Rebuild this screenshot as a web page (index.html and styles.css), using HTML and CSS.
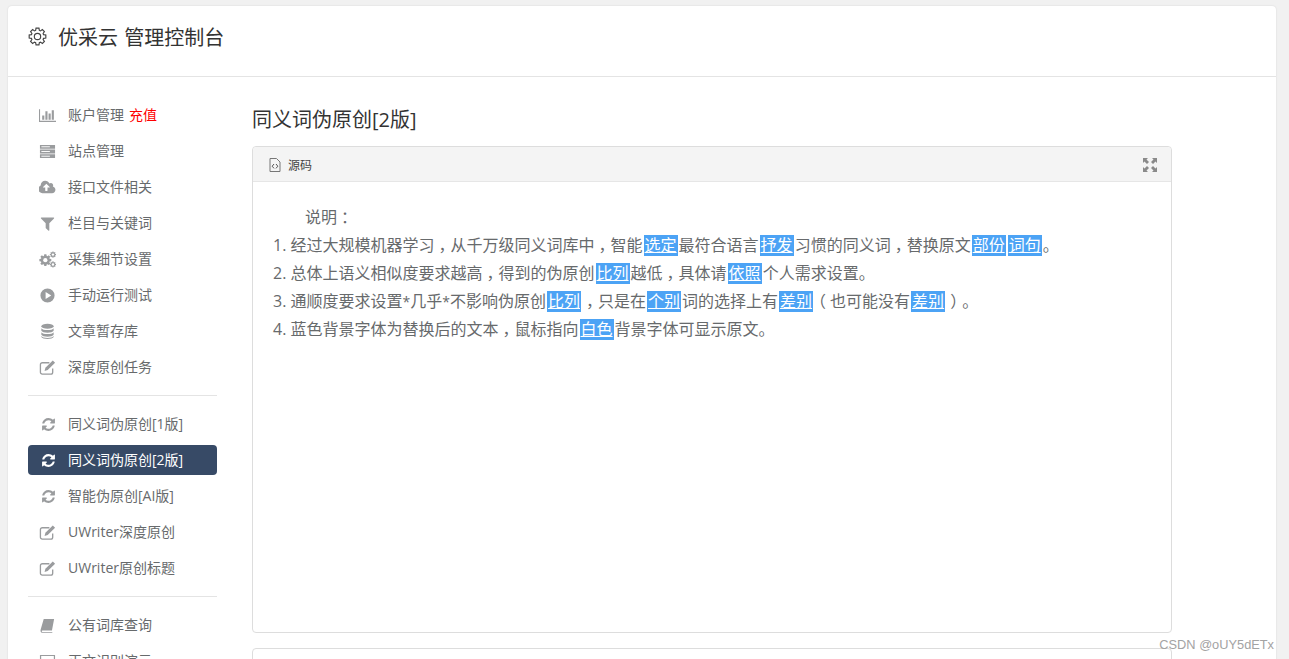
FILE: index.html
```html
<!DOCTYPE html>
<html lang="zh-CN">
<head>
    <meta charset="UTF-8">
    <title>优采云 管理控制台</title>
    <link rel="stylesheet" href="styles.css">
</head>
<body>
    <svg class="defs" width="0" height="0">
        <defs>
            <polygon id="gear" points="7.61,1.12 10.39,1.12 10.75,3.26 11.82,3.7 13.59,2.45 15.55,4.41 14.3,6.18 14.74,7.25 16.88,7.61 16.88,10.39 14.74,10.75 14.3,11.82 15.55,13.59 13.59,15.55 11.82,14.3 10.75,14.74 10.39,16.88 7.61,16.88 7.25,14.74 6.18,14.3 4.41,15.55 2.45,13.59 3.7,11.82 3.26,10.75 1.12,10.39 1.12,7.61 3.26,7.25 3.7,6.18 2.45,4.41 4.41,2.45 6.18,3.7 7.25,3.26"/>
            <symbol id="i-refresh" viewBox="0 0 1792 1792"><path d="M1639 1056q0 5-1 7-64 268-268 434.5t-478 166.5q-146 0-282.5-55t-243.5-157l-129 129q-19 19-45 19t-45-19-19-45v-448q0-26 19-45t45-19h448q26 0 45 19t19 45-19 45l-137 137q71 66 161 102t187 36q134 0 250-65t186-179q11-17 53-117 8-23 30-23h192q13 0 22.5 9.5t9.5 22.5zm25-800v448q0 26-19 45t-45 19h-448q-26 0-45-19t-19-45 19-45l138-138q-148-137-349-137-134 0-250 65t-186 179q-11 17-53 117-8 23-30 23h-199q-13 0-22.5-9.5t-9.5-22.5v-7q65-268 270-434.5t480-166.5q146 0 284 55.5t245 156.5l130-129q19-19 45-19t45 19 19 45z"/></symbol>
            <symbol id="i-edit" viewBox="0 0 18 18"><path d="M14.500 10v4a2 2 0 0 1-2 2H3.500a2 2 0 0 1-2-2V6a2 2 0 0 1 2-2h7.500" fill="none" stroke="currentColor" stroke-width="1.400"/><path d="M14.600 1.500l2.400 2.400-7.800 7.800-3.300.9.900-3.300z"/></symbol>
        </defs>
    </svg>
    <div class="card">
        <header class="card-head">
            <svg class="head-icon" viewBox="0 0 18 18"><use href="#gear"/><circle cx="9" cy="9" r="3"/></svg>
            <h1>优采云 管理控制台</h1>
        </header>
        <div class="main">
            <nav class="sidebar">
                <ul class="menu">
                    <li>
                        <svg class="icon" viewBox="0 0 2048 1792"><path d="M640 896v512h-256v-512h256zm384-512v1024h-256v-1024h256zm1024 1152v128h-2048v-1536h128v1408h1920zm-640-896v768h-256v-768h256zm384-384v1152h-256v-1152h256z"/></svg>
                        <span>账户管理</span><span class="recharge">充值</span>
                    </li>
                    <li>
                        <svg class="icon" viewBox="0 0 18 18"><path d="M1 2h16v4H1zM1 7h16v4H1zM1 12h16v4H1z"/><path class="cut" d="M2.500 4h9M2.500 9h9M2.500 14h9"/></svg>
                        <span>站点管理</span>
                    </li>
                    <li>
                        <svg class="icon" viewBox="0 0 1920 1792"><path d="M1216 864q0-14-9-23l-352-352q-9-9-23-9t-23 9l-351 351q-10 12-10 24 0 14 9 23t23 9h224v352q0 13 9.500 22.500t22.500 9.500h192q13 0 22.500-9.500t9.500-22.500v-352h224q13 0 22.500-9.500t9.500-22.500zm640 288q0 159-112.500 271.500t-271.500 112.500h-1088q-185 0-316.500-131.500t-131.500-316.500q0-130 70-240t188-165q-2-30-2-43 0-212 150-362t362-150q156 0 285.500 87t188.500 231q71-62 166-62 106 0 181 75t75 181q0 76-41 138 130 31 213.500 135.500t83.500 238.500z"/></svg>
                        <span>接口文件相关</span>
                    </li>
                    <li>
                        <svg class="icon" viewBox="0 0 1792 1792"><path d="M1595 295q17 41-14 70l-493 493v742q0 42-39 59-13 5-25 5-27 0-45-19l-256-256q-19-19-19-45v-486l-493-493q-31-29-14-70 17-39 59-39h1280q42 0 59 39z"/></svg>
                        <span>栏目与关键词</span>
                    </li>
                    <li>
                        <svg class="icon" viewBox="0 0 18 18">
                            <g transform="translate(-0.500 2.500) scale(0.8)"><use href="#gear"/><circle class="hole" cx="9" cy="9" r="2.800"/></g>
                            <g transform="translate(11 0) scale(0.42)"><use href="#gear"/><circle class="hole" cx="9" cy="9" r="3"/></g>
                            <g transform="translate(11 10.500) scale(0.42)"><use href="#gear"/><circle class="hole" cx="9" cy="9" r="3"/></g>
                        </svg>
                        <span>采集细节设置</span>
                    </li>
                    <li>
                        <svg class="icon" viewBox="0 0 18 18"><path fill-rule="evenodd" d="M9 1.500a7.500 7.500 0 1 1 0 15 7.500 7.500 0 0 1 0-15zM7 5.300v7.400L13 9z"/></svg>
                        <span>手动运行测试</span>
                    </li>
                    <li>
                        <svg class="icon" viewBox="0 0 18 18"><ellipse cx="9" cy="3.500" rx="6.500" ry="2.700"/><path d="M2.500 5.500c1 2.600 12 2.600 13 0v2.800c-1 2.800-12 2.800-13 0zM2.500 9.800c1 2.600 12 2.600 13 0v2.600c-1 2.800-12 2.800-13 0zM2.500 13.800c1 2.600 12 2.600 13 0v1c-1 2.800-12 2.800-13 0z"/></svg>
                        <span>文章暂存库</span>
                    </li>
                    <li>
                        <svg class="icon"><use href="#i-edit"/></svg>
                        <span>深度原创任务</span>
                    </li>
                </ul>
                <hr class="divider">
                <ul class="menu">
                    <li>
                        <svg class="icon small"><use href="#i-refresh"/></svg>
                        <span>同义词伪原创[1版]</span>
                    </li>
                    <li class="active">
                        <svg class="icon small"><use href="#i-refresh"/></svg>
                        <span>同义词伪原创[2版]</span>
                    </li>
                    <li>
                        <svg class="icon small"><use href="#i-refresh"/></svg>
                        <span>智能伪原创[AI版]</span>
                    </li>
                    <li>
                        <svg class="icon"><use href="#i-edit"/></svg>
                        <span>UWriter深度原创</span>
                    </li>
                    <li>
                        <svg class="icon"><use href="#i-edit"/></svg>
                        <span>UWriter原创标题</span>
                    </li>
                </ul>
                <hr class="divider">
                <ul class="menu">
                    <li>
                        <svg class="icon" viewBox="0 0 18 18"><path d="M5 2h11l-2.300 12.300H3.600c-.8 0-.9 1.700 0 1.700h10.500v.8H3.200C1.800 16.800 1.400 15 1.700 13.500z"/></svg>
                        <span>公有词库查询</span>
                    </li>
                    <li>
                        <svg class="icon" viewBox="0 0 18 18"><path fill-rule="evenodd" d="M1 2h16v11H1zM2.300 3.300v8.400h13.400V3.300zM6 14.500h6V16H6z"/></svg>
                        <span>正文识别演示</span>
                    </li>
                </ul>
            </nav>
            <section class="content">
                <h2>同义词伪原创[2版]</h2>
                <div class="editor">
                    <div class="toolbar">
                        <div class="source-btn">
                            <svg class="file-icon" viewBox="0 0 12 14"><path d="M1 .500h6.500L11 4v9.500H1z" fill="none" stroke="#777"/><path d="M5 6L3.200 8.200 5 10.400M7 6l1.800 2.200L7 10.400" fill="none" stroke="#555"/></svg>
                            <span>源码</span>
                        </div>
                        <svg class="full-icon" viewBox="0 0 14 14"><path d="M0 0h5L3.500 1.500 6 4 4 6 1.500 3.500 0 5zM14 0v5l-1.500-1.500L10 6 8 4l2.500-2.500L9 0zM0 14V9l1.500 1.500L4 8l2 2-2.500 2.500L5 14zM14 14H9l1.500-1.500L8 10l2-2 2.500 2.500L14 9z"/></svg>
                    </div>
                    <div class="editor-body">
                        <p class="intro">说明<span class="punct">：</span></p>
                        <p>1. 经过大规模机器学习<span class="punct">，</span>从千万级同义词库中<span class="punct">，</span>智能<span class="swap">选定</span>最符合语言<span class="swap">抒发</span>习惯的同义词<span class="punct">，</span>替换原文<span class="swap">部份</span><span class="swap">词句</span>。</p>
                        <p>2. 总体上语义相似度要求越高<span class="punct">，</span>得到的伪原创<span class="swap">比列</span>越低<span class="punct">，</span>具体请<span class="swap">依照</span>个人需求设置。</p>
                        <p>3. 通顺度要求设置<span class="star">*</span>几乎<span class="star">*</span>不影响伪原创<span class="swap">比列</span><span class="punct">，</span>只是在<span class="swap">个别</span>词的选择上有<span class="swap">差别</span><span class="punct">（</span>也可能没有<span class="swap">差别</span><span class="punct">）</span>。</p>
                        <p>4. 蓝色背景字体为替换后的文本<span class="punct">，</span>鼠标指向<span class="swap">白色</span>背景字体可显示原文。</p>
                    </div>
                </div>
                <div class="editor next"></div>
            </section>
        </div>
    </div>
    <div class="watermark">CSDN @oUY5dETx</div>
</body>
</html>
```

FILE: styles.css
```css
* {
    box-sizing: border-box;
    margin: 0;
    padding: 0;
}

html, body {
    height: 100%;
    overflow: hidden;
}

body {
    background-color: #f1f1f1;
    color: #676a6c;
    font-family: "Open Sans", "Noto Sans CJK SC", sans-serif;
    font-size: 14px;
    padding: 6px 13px 0 8px;
}

.defs {
    display: block;
    height: 0;
}

.card {
    background-color: #fff;
    border-radius: 4px 4px 0 0;
    box-shadow: 0 0 2px rgba(0, 0, 0, 0.12);
    height: 800px;
}

.card-head {
    align-items: center;
    border-bottom: 1px solid #e4e4e4;
    display: flex;
    height: 71px;
    padding: 0 0 10px 20px;
}

.card-head h1 {
    color: #333;
    font-size: 20px;
    font-weight: 400;
    margin-left: 11px;
    word-spacing: 1px;
}

.head-icon {
    fill: none;
    height: 19px;
    stroke: #444;
    stroke-width: 1.1;
    width: 19px;
}

.main {
    display: flex;
}

.sidebar {
    flex: none;
    margin-left: 20px;
    padding-top: 23px;
    width: 189px;
}

.menu {
    display: flex;
    flex-direction: column;
    gap: 6px;
    list-style: none;
}

.menu li {
    align-items: center;
    border-radius: 4px;
    display: flex;
    height: 30px;
    padding-left: 11px;
}

.menu li span {
    padding-bottom: 2px;
    white-space: nowrap;
}

.menu li .recharge {
    color: #f00;
    margin-left: 5px;
}

.menu .active {
    background-color: #374a66;
    color: #fff;
}

.icon {
    color: #9a9c9e;
    fill: #9a9c9e;
    flex: none;
    height: 17px;
    margin-right: 12px;
    width: 17px;
}

.icon.small {
    height: 15px;
    margin-left: 2px;
    margin-right: 12px;
    width: 15px;
}

.active .icon {
    fill: #fff;
}

.icon .cut {
    fill: none;
    stroke: #fff;
    stroke-width: 1;
}

.icon .hole {
    fill: #fff;
}

.divider {
    border: 0;
    border-top: 1px solid #e4e4e4;
    margin: 13px 0;
}

.content {
    flex: none;
    margin-left: 35px;
    padding-top: 28px;
    width: 920px;
}

.content h2 {
    color: #333;
    font-size: 20px;
    font-weight: 400;
    height: 41px;
    line-height: 30px;
}

.editor {
    border: 1px solid #ddd;
    border-radius: 4px;
    height: 487px;
}

.editor.next {
    height: 100px;
    margin-top: 15px;
}

.toolbar {
    align-items: center;
    background-color: #f4f4f4;
    border-bottom: 1px solid #e6e6e6;
    border-radius: 4px 4px 0 0;
    display: flex;
    height: 35px;
    justify-content: space-between;
    padding: 2px 14px 0 16px;
}

.source-btn {
    align-items: center;
    color: #444;
    display: flex;
    font-size: 12px;
}

.file-icon {
    height: 14px;
    margin-right: 7px;
    width: 12px;
}

.full-icon {
    fill: #8a8a8a;
    height: 14px;
    width: 14px;
}

.editor-body {
    font-size: 16px;
    line-height: 28px;
    padding: 21px 20px 0;
}

.editor-body p {
    height: 28px;
}

.intro {
    padding-left: 32px;
}

.swap {
    background-color: #4ca3f5;
    color: #fff;
    display: inline-block;
    line-height: 21px;
    margin: 0 1px;
    padding: 0 1px;
    text-decoration: underline;
    text-underline-offset: 1px;
}

/* half-width punctuation, padded so it sits mid-box as in the original font */
.punct {
    font-feature-settings: "halt";
    padding: 0 4px;
}

.star {
    font-size: 14px;
}

.watermark {
    color: #a3a3a3;
    font-family: "Liberation Sans", sans-serif;
    font-size: 12.8px;
    position: absolute;
    right: 15px;
    top: 637px;
}
```
